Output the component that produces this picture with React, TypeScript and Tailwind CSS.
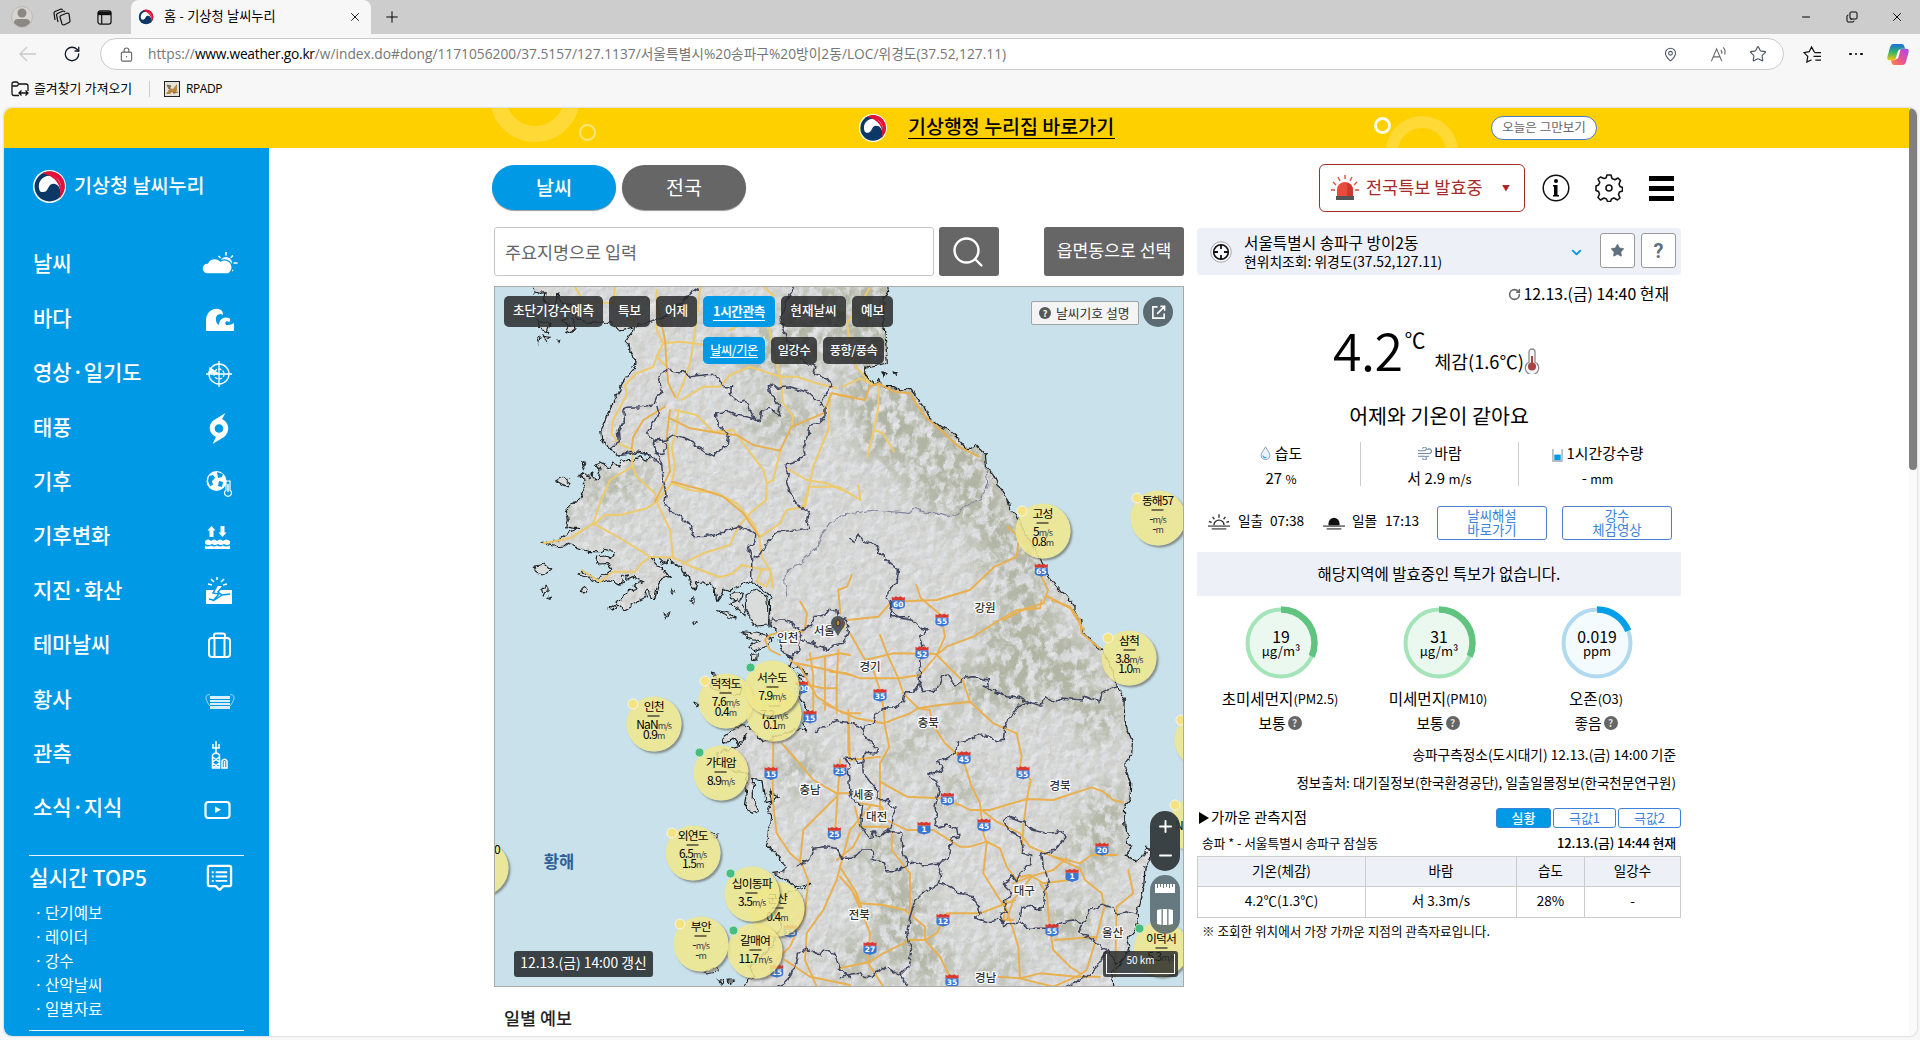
import React from "react";
import { Star, ChevronDown, Search, Minus, Plus, X, RotateCw, MapPin, Copy } from "lucide-react";

const KR = "font-['Noto_Sans_CJK_KR',sans-serif]";
const UI = "font-['Open_Sans','Noto_Sans_CJK_KR',sans-serif]";

/* ---------- map geometry ---------- */
type Tile = { x: number; y: number; kx: number; ky: number };
const NW: Tile = { x: 490, y: 280, kx: 1 / 3, ky: 1 / 3 };
const SW: Tile = { x: 490, y: 600, kx: 1 / 3, ky: 1 / 3 };
const SE: Tile = { x: 840, y: 600, kx: 1 / 3, ky: 1 / 3 };
const NE: Tile = { x: 490, y: 220, kx: 1 / 2.24, ky: 1 / 3 };

const pts = (t: Tile, s: string) =>
  s.trim().split(/\s+/).map((p) => {
    const [a, b] = p.split(",").map(Number);
    return `${(t.x + a * t.kx).toFixed(1)},${(t.y + b * t.ky).toFixed(1)}`;
  }).join(" ");

const WEST_COAST = [
  pts(NW, "130,0 130,20 135,35 150,40 165,38 160,60 175,70 185,85 200,80 200,40 215,70 235,75 262,80 258,110 270,120 300,130 335,125 350,130 360,122 380,150 400,148 430,140 428,155 405,182 418,195 420,215 438,245 435,260 412,285 395,310 385,340 370,365 358,390 345,420 332,450 335,475 345,490 352,503 362,505 375,525 390,528 410,518 430,512 470,518 480,535 470,540 450,530 430,545 410,540 395,545 385,560 370,545 355,565 345,552 330,545 320,550 330,570 325,595 315,600 305,580 300,590 275,578 270,590 285,600 280,615 283,630 275,640 265,660 260,668 245,672 228,690 235,720 230,740 250,745 270,745 245,752 230,758 215,770 200,782 175,790 152,785 175,795 200,800 225,798 235,790 255,800 280,810 300,815 330,815 345,808 370,815 372,825 362,838 350,830 340,825 320,828 318,845 330,852 350,850 362,860 365,870 345,885 325,895 300,888 290,880 275,870 265,885 290,890 310,902 330,908 360,900 370,905 385,915 400,905 395,890 412,885 410,900 430,890 450,900 460,905 430,915 440,925 420,930 400,950 380,970 358,985 365,990 385,975 400,990 410,985 440,970 450,960 470,950 465,935 475,930 480,955 495,955 500,930 505,910 520,890 540,895 530,880 515,870 520,860 500,855 485,838 490,830 510,838 520,850 540,840 550,848 575,860 580,875 595,890 605,920 615,930 620,910 635,905 650,915 660,908 675,925 680,965 695,945 700,925 720,935 740,920 760,912 785,905 800,915 820,930 845,950"),
  pts(SW, "838,0 840,78 860,90 865,120 870,140 880,160 905,175 895,200 910,205 925,200 950,220 945,230 925,222 935,250 925,290 960,340 935,370 950,392 920,385 890,400 850,410 820,425 780,385 750,370 735,390 720,395 700,410 700,430 730,415 745,435 770,400 750,440 700,450 680,460 690,490 720,510 775,520 765,560 770,590 765,625 790,640 805,630 790,600 790,535 815,540 820,570 825,605 848,600 840,575 865,590 845,605 830,630 845,650 842,670 835,690 832,720 825,740 845,745 860,765 870,770 875,790 885,800 885,815 850,820 890,840 920,860 960,850 940,865 900,875 870,890 850,920 860,960 880,980 860,1000 845,1040 820,1065 790,1085 780,1100 790,1130 770,1140 758,1175"),
].join(" ");
const EAST_COAST = [
  pts(SE, "820,1175 815,1120 835,1100 850,1080 870,1040 862,1015 885,990 895,965 890,940 900,900 912,850 915,800 932,775 930,748 920,745 905,775 885,785 855,765 875,740 862,725 862,700 855,680 853,620 870,600 872,550 858,510 858,485 878,460 880,430 860,385 855,360 852,320 853,295 828,258 820,215 790,155 765,135 730,95 722,60 705,38 705,20 690,0"),
  pts(NE, "1300,1145 1270,1100 1245,1060 1225,1000 1195,930 1180,890 1165,870 1160,840 1140,800 1125,760 1112,740 1110,705 1088,675 1070,690 1050,660 1030,630 1010,620 985,595 975,565 955,530 942,508 925,515 905,500 880,500 870,478 860,495 840,465 845,440 890,430 885,340 880,300 885,250 880,230 893,215 888,180"),
].join(" ");

const ISLANDS = [
  pts(NW, "135,858 165,852 182,868 160,885 140,880"), pts(NW, "198,602 215,592 240,608 235,620 215,612"),
  pts(NW, "155,930 170,918 172,938 160,945"), pts(NW, "275,545 288,550 280,565"), pts(NW, "274,930 285,922 292,936 278,942"),
  pts(NW, "720,945 735,935 760,940 752,960 728,962"), pts(NW, "600,965 612,953 612,970"), pts(NW, "522,998 536,998 530,1012"),
  pts(NW, "608,1022 620,1025 612,1036"), pts(NW, "685,992 720,1000 740,1018 715,1012"), pts(NW, "172,955 188,948 180,958"),
  pts(NW, "768,945 800,928 830,950 836,1035 800,1038 782,1020 770,985"), pts(NW, "720,970 745,960 768,990 765,1010 740,985"),
  pts(NW, "140,120 180,130 172,158 158,150"), pts(NW, "140,175 150,172 146,192"), pts(NW, "160,168 180,172 172,182"),
  pts(NW, "215,120 250,118 255,150 225,160 238,138"), pts(NW, "198,180 206,178 204,186"), pts(NW, "545,925 553,932 548,945"),
  pts(SW, "755,95 800,100 850,115 830,140 790,152 775,140 810,120 770,112"), pts(SW, "785,165 802,160 800,180 788,178"),
  pts(SW, "665,218 680,225 675,235"), pts(SW, "615,310 628,310 622,322"), pts(SW, "650,245 690,240 755,262 750,285 700,275 660,262"),
  pts(SW, "660,700 682,705 672,715"), pts(SW, "640,1115 680,1100 685,1115 650,1122"), pts(SW, "685,1140 700,1138 695,1152"),
  pts(SW, "715,1140 730,1140 722,1150"), pts(NE, "905,455 912,460 908,466"), pts(NE, "880,455 888,462 882,470"),
];

const BORDERS = [
  pts(NW, "625,22 600,40 580,65 545,80 530,110 500,120 470,128 430,140"),
  pts(NW, "510,280 540,265 550,275 580,275 600,290 640,285 665,283 690,300 700,320 725,320 720,345 745,365 765,360 790,410 810,428 815,390 840,385 865,405 872,375 840,345 835,320 850,312 860,325 900,320 950,335 985,365 1005,385 1005,410 985,430 960,435 955,470 940,500 945,525 920,545 885,555 895,580 890,605 900,640 930,680 958,695 950,720 958,745 900,752 860,755 830,790 810,825 785,838"),
  pts(NW, "510,280 505,310 520,335 500,350 490,375 450,380 410,382 402,390 403,420 385,450 388,485 362,500"),
  pts(NW, "500,375 505,400 490,430 470,455 480,475 500,485 525,480 550,465 580,472 610,485 620,500 650,520 675,528 690,510 715,495 718,470 700,450 680,430 680,400 710,392 740,405 790,415 810,428"),
  pts(NW, "490,485 500,520 515,555 520,600 528,640 525,670 540,695 575,710 600,735 612,770 660,768 700,755 740,740 780,752 797,765 795,785 775,800 785,838 785,905"),
  pts(NW, "375,530 400,525 440,517 480,525 500,545 515,555"),
  pts(NW, "490,485 510,480 530,495 520,520 500,520"),
  pts(NE, "680,200 670,220 650,300 665,360 690,390 700,425 730,440 725,460 755,475 765,490 760,510 745,530 740,560"),
  pts(NE, "803,955 815,965 825,945 840,965 865,975 875,1000 895,1030 915,1045 912,1090 895,1100 890,1130 900,1165 895,1190 940,1190"),
  pts(SE, "155,0 150,30 185,55 215,60 240,85 265,90 240,110 250,140 240,150 238,250 220,275 195,275 190,305 165,322 135,320 105,345 100,370 70,380 80,415 115,450 110,462 75,460 68,490 70,520 90,545 110,570 112,600 145,598 150,620 170,625 155,650 155,670 145,690 160,698 185,700 190,760 205,785 250,795 295,790"),
  pts(SW, "840,78 850,60 880,60 910,75 935,90 965,75 975,50 1005,45 1020,25 1040,30 1045,50 1070,60 1075,95 1060,130 1030,135 1010,150 970,130 935,120 925,95"),
  pts(SW, "925,120 930,150 905,170 880,160"),
  pts(SE, "238,250 245,275 290,270 305,230 325,225 345,255 370,235 400,230 445,240 448,258 430,262 460,272 500,290 540,295 565,305 605,318 615,290 640,308 670,295 730,300 730,285 780,305 785,280 830,258"),
  pts(SE, "565,305 540,315 510,350 495,380 490,420 470,425 420,400 390,420 355,425 345,460 320,475 290,485 310,500 300,520 285,515 260,525 290,545 298,570 285,620 290,640 282,675 300,680 320,675 350,685 355,710 335,715 325,775 295,790 305,820 298,850 250,875 225,900 210,950 200,1000 215,1050 205,1100 180,1125 205,1160"),
  pts(SE, "-75,395 -10,362 40,370 70,390"),
  pts(SE, "68,490 40,475 15,475 30,500 25,520 30,580 45,610 68,615 65,640 62,680 75,700 95,718 100,690 115,712 130,700 145,690"),
  pts(SW, "920,800 960,775 970,745 1000,740 1040,745 1055,775 1080,775 1100,765 1115,750 1145,750 1150,780 1180,785 1185,812 1215,812 1245,800 1255,785"),
  pts(SE, "298,850 330,860 355,880 390,885 415,915 420,940 405,955 440,965 480,960 490,978 510,970 540,965 545,925 575,915 590,930 610,925 615,870 628,845 610,800 605,760 645,750 675,715 665,695 620,700 575,690 550,665 505,650 490,660 505,690 540,710 550,760 575,765 570,790 540,820 530,845 515,825 490,855 515,880 490,905 505,940 480,940 490,978"),
  pts(SE, "545,965 560,985 640,985 665,965 700,960 730,970 715,1000 745,1010 770,1030 800,1050 830,1090"),
  pts(SE, "730,970 750,930 790,915 820,925 830,945 860,935 890,945"),
  pts(SE, "680,1160 740,1130 770,1100 800,1055"),
  pts(SE, "0,1130 50,1120 80,1130 110,1120 135,1100 180,1125"),
  pts(SW, "860,1160 880,1150 900,1130 920,1090 925,1060 950,1045 990,1065 1000,1050 1035,1065 1050,1110 1080,1130"),
];
const DMZ = pts(NE, "665,1130 660,1080 665,1050 700,1030 705,1010 735,980 740,950 760,910 790,885 860,870 940,880 950,865 980,880 1010,880 1040,890 1060,860 1100,840 1115,790 1110,740");

const YELLOW = [
  pts(NW, "255,20 280,65 375,70 430,130"), pts(NW, "375,20 370,70"),
  pts(NW, "500,30 500,150 520,190 500,230 490,260 440,280 405,315 410,345 370,420 365,460 385,490 430,510 425,560 360,600 330,670 310,730 240,775 160,790"),
  pts(NW, "310,730 400,780 480,830 550,833 540,750 500,665 495,640 440,590 425,555"),
  pts(NW, "500,665 470,685 390,705 345,705 310,735"),
  pts(NW, "480,830 455,850 435,875 370,875 330,905 275,870"),
  pts(NW, "550,833 610,862 690,892 730,880 755,855 800,865 840,870 850,925"),
  pts(NW, "815,870 800,905 830,920 845,880"),
  pts(NW, "580,850 640,820 720,795 745,740 780,700 828,660 830,610"),
  pts(NW, "545,610 600,630 680,640 740,670 790,730 808,770 815,830 840,870"),
  pts(NW, "520,190 570,185 610,190 645,195"), pts(NW, "610,190 600,250 580,310 560,355"),
  pts(NW, "630,20 625,80 610,190"), pts(NW, "500,230 530,260"),
  pts(NW, "565,390 560,450 545,500 555,560 545,610 500,665"),
  pts(NW, "555,390 620,405 670,455 730,450 790,530 820,570 830,610 850,600 860,555 875,500"),
  pts(NW, "575,360 640,320 690,320 720,285 780,260 870,290 920,290 980,310 1040,325"),
  pts(NW, "820,20 850,45 830,90 840,160 870,290 880,370 910,410 905,440"), pts(NW, "890,565 950,600 1010,610 1080,640"),
  pts(NW, "720,150 760,130 830,120"),
  pts(NW, "1020,340 1015,450 970,560 945,680 890,690 870,730 810,770"),
  pts(NE, "870,495 870,560 860,630 845,710"), pts(NE, "860,630 880,640 905,695"), pts(NE, "700,860 715,800 780,800 830,840 825,795"),
  pts(NE, "850,205 830,250 800,310 810,400 820,440 855,495"), pts(NE, "790,500 830,475 860,495"),
];
const ORANGE = [
  pts(NW, "500,60 525,180 530,260 535,310 555,350"), pts(NW, "540,390 530,470 540,575 495,665"),
  pts(NW, "525,380 460,420 430,470 425,505"),
  pts(NW, "540,415 600,445 690,460 740,465 790,495 870,512 905,440 1000,400 1025,340 1080,350"),
  pts(NW, "545,605 640,630 700,650 760,700 808,770"),
  pts(NE, "780,525 840,540 850,500 870,490 905,515 940,520 975,590 1010,630 1050,680 1095,710"),
  pts(NE, "1160,920 1185,950 1180,1010 1130,1040 1075,1110 1000,1140 900,1145 870,1190 800,1200 790,1225"),
  pts(NE, "1225,1040 1250,1110 1240,1150 1200,1165 1150,1200"), pts(NE, "1250,1130 1300,1165 1330,1230"),
  pts(NE, "955,1095 965,1135 1010,1185"), pts(NE, "810,1065 800,1100 780,1110 785,1180"), pts(NE, "695,1145 710,1180 705,1230"),
  pts(SE, "605,0 600,25 530,30 470,65 400,110 320,140 290,165"), pts(SE, "635,0 690,20 720,60 725,100 780,145"),
  pts(SE, "306,60 315,110 290,165 240,225 175,235 60,235 20,220 -30,215"), pts(SE, "75,180 160,160 290,162"),
  pts(SE, "290,165 370,245 390,305 460,370 530,400 545,470 540,500 572,540 560,600 550,680 545,760"),
  pts(SE, "120,105 145,170 175,235 190,280 235,325 300,315 390,305"), pts(SE, "30,100 70,170 100,210 120,270 130,320 135,380 148,440 120,490 120,630"),
  pts(SE, "235,325 210,340 130,370 50,355 -50,310"),
  pts(SE, "235,325 270,330 275,370 315,430 370,480 395,560 420,610 430,700 440,730 430,820 480,900 500,930 520,990 535,1040 540,1135"),
  pts(SE, "120,545 200,590 300,595 360,615 390,630 450,630 560,597 640,600 700,580 755,562 790,575 820,600 848,607"),
  pts(SE, "425,630 470,665 540,700 570,740 640,770 720,790 755,765 830,765"), pts(SE, "680,775 640,810 570,830 520,850"),
  pts(SE, "640,770 720,805 735,840 785,880 793,920 770,1010 740,1110 710,1130 600,1120 540,1135 475,1130"),
  pts(SE, "520,835 570,825 610,850 690,840"), pts(SE, "600,850 620,880 630,990 640,1050 690,1100 720,1120"),
  pts(SE, "525,900 420,940 320,940 290,1000 255,1020 210,1020 130,1060 90,1085 0,1105"),
  pts(SE, "140,660 200,690 280,690 360,740 390,740 440,725 480,745 500,800 530,840"),
  pts(SE, "155,700 155,750 210,820 210,940"), pts(SE, "195,930 255,980 255,1020 300,1070 335,1140"), pts(SE, "60,700 40,740 -10,780"),
  pts(SE, "0,830 35,870 60,910 130,915 195,930"), pts(SE, "40,880 75,960 90,1000 85,1090 130,1160"),
  pts(SE, "865,810 880,880 830,920 825,1130"), pts(SE, "25,375 25,450 30,480 120,470"), pts(SE, "645,1020 770,1010"),
  pts(SE, "60,610 125,620 140,660"), pts(SE, "500,900 490,960 520,960"), pts(SE, "540,1135 640,1160 710,1130 780,1130"),
  pts(SE, "45,620 60,680 145,680"), pts(SE, "575,830 520,900 500,960"),
  pts(SW, "950,180 1050,160 1080,165"), pts(SW, "875,430 920,480 970,540 1040,580 1080,580"),
  pts(SW, "850,420 848,600 860,700 900,760 935,790 955,840 945,940 900,1040 860,1080"), pts(SW, "1040,590 940,690 930,790"),
  pts(SW, "900,180 930,200 980,290 1060,340 1110,340"), pts(SW, "960,160 970,230 970,330"), pts(SW, "1005,170 1005,330"),
  pts(SW, "1045,150 1040,250 1040,340"), pts(SW, "920,190 1040,215 1080,225"), pts(SW, "930,250 1000,265 1040,265"),
  pts(SW, "870,165 840,150 825,120 840,105 880,95 940,95"), pts(SW, "1140,620 1080,690 1040,840 1000,930 950,1000 945,1080 980,1160"),
  pts(SW, "1050,480 1035,700"), pts(SW, "1075,330 1080,480"), pts(SW, "885,1080 960,1130 1080,1155"), pts(SW, "1050,800 1100,880 1120,940"),
];

const SHIELDS: [Tile, number, number, string][] = [
  [SE, 175, 8, "60"], [SE, 306, 60, "55"], [SE, 246, 158, "52"], [SE, 120, 285, "35"], [SE, 372, 473, "45"], [SE, 549, 518, "55"],
  [SE, 322, 597, "30"], [SE, 252, 684, "1"], [SE, 432, 675, "45"], [SE, 786, 747, "20"], [SE, 696, 826, "1"], [SE, 309, 960, "12"],
  [SE, 636, 990, "55"], [SE, 90, 1045, "27"], [SE, 336, 1142, "35"], [SW, 843, 520, "15"], [SW, 1050, 510, "25"], [SW, 1033, 700, "25"],
  [SW, 960, 350, "15"], [SW, 934, 262, "100"], [SW, 901, 993, "15"], [SW, 860, 1113, "15"], [NE, 1235, 1050, "65"],
];
const CITIES: [Tile, number, number, string][] = [
  [SE, 435, 22, "강원"], [SE, 90, 200, "경기"], [SE, 265, 367, "충북"], [SE, 70, 585, "세종"], [SE, 110, 649, "대전"], [SE, 660, 556, "경북"],
  [SE, 58, 943, "전북"], [SE, 553, 873, "대구"], [SE, 818, 998, "울산"], [SE, 437, 1133, "경남"], [SW, 1003, 93, "서울"], [SW, 893, 114, "인천"], [SW, 960, 568, "충남"],
];
/* mountain shading: cx, cy, rx, ry, rotation */
const HILLS = [
  [880, 400, 35, 70, -10], [950, 460, 50, 70, -25], [1010, 560, 28, 90, -22], [1040, 660, 70, 40, 25], [860, 310, 80, 34, 0], [775, 350, 50, 26, 0],
  [780, 420, 40, 20, 0], [985, 690, 50, 22, 10], [915, 745, 45, 12, -30], [1100, 720, 30, 20, 0], [900, 910, 30, 40, 0], [925, 960, 30, 25, 0],
  [1100, 830, 25, 50, 20], [800, 770, 20, 25, 0], [1070, 920, 30, 20, 0], [880, 850, 25, 20, 0], [590, 500, 35, 10, -10], [625, 480, 30, 14, -10],
  [960, 790, 25, 15, -30], [860, 960, 30, 20, 0], [1000, 965, 25, 15, 0],
];

function MapCanvas() {
  const land = `${WEST_COAST} ${EAST_COAST}`;
  return (
    <svg viewBox="495 287 688 699" className="block size-full">
      <defs>
        <clipPath id="land"><polygon points={land} /></clipPath>
        <filter id="rough" x="0" y="0" width="1" height="1">
          <feTurbulence type="fractalNoise" baseFrequency="0.16" numOctaves="2" seed="4" />
          <feDisplacementMap in="SourceGraphic" scale="6" xChannelSelector="R" yChannelSelector="G" />
        </filter>
        <filter id="relief" x="0" y="0" width="1" height="1" colorInterpolationFilters="sRGB">
          <feTurbulence type="fractalNoise" baseFrequency="0.13" numOctaves="4" seed="8" />
          <feColorMatrix values="0 0 0 0 0  0 0 0 0 0  0 0 0 0 0  1 0 0 0 0" />
          <feDiffuseLighting surfaceScale="0.34" diffuseConstant="1.21" lightingColor="#dcddde">
            <feDistantLight azimuth="225" elevation="55" />
          </feDiffuseLighting>
        </filter>
        <filter id="hills" x="0" y="0" width="1" height="1" colorInterpolationFilters="sRGB">
          <feGaussianBlur in="SourceGraphic" stdDeviation="12" result="b" />
          <feTurbulence type="fractalNoise" baseFrequency="0.11 0.08" numOctaves="5" seed="12" />
          <feColorMatrix values="0 0 0 0 0  0 0 0 0 0  0 0 0 0 0  4.5 0 0 0 -1.7" result="n" />
          <feComposite in="b" in2="n" operator="in" />
        </filter>
      </defs>
      <rect x="494" y="286" width="690" height="701" fill="#c8e1ea" />
      <g filter="url(#rough)">
        <rect x="494" y="286" width="690" height="701" fill="#c8e1ea" />
        <polygon points={land} fill="#dcdddd" />
        <g clipPath="url(#land)">
          <rect x="494" y="286" width="690" height="701" filter="url(#relief)" />
          <g filter="url(#hills)" opacity="0.75">
            <rect x="494" y="286" width="690" height="701" fill="#b3b5a0" opacity="0.2" />
            {HILLS.map(([x, y, rx, ry, r], i) => (
              <ellipse key={i} cx={x} cy={y} rx={rx} ry={ry} fill="#a5a992" transform={`rotate(${r} ${x} ${y})`} />
            ))}
          </g>
        </g>
        <polyline points={WEST_COAST} fill="none" stroke="#1d2024" strokeWidth="1.2" />
        <polyline points={EAST_COAST} fill="none" stroke="#1d2024" strokeWidth="1.2" />
        {ISLANDS.map((p, i) => <polygon key={i} points={p} fill="#d9dcdb" stroke="#1d2024" strokeWidth="1.1" />)}
      </g>
      <g fill="none" strokeLinejoin="round" strokeLinecap="round">
        {YELLOW.map((p, i) => <polyline key={i} points={p} stroke="#edcb6c" strokeWidth="2" />)}
        {ORANGE.map((p, i) => <polyline key={i} points={p} stroke="#e9b04e" strokeWidth="1.9" />)}
      </g>
      <g fill="none" strokeLinejoin="round" filter="url(#rough)">
        {BORDERS.map((p, i) => <polyline key={i} points={p} stroke="#40455f" strokeWidth="1.5" />)}
        <polyline points={DMZ} stroke="#8486a0" strokeWidth="1.2" />
      </g>
      {SHIELDS.map(([t, x, y, n], i) => (
        <g key={i} transform={`translate(${t.x + x * t.kx} ${t.y + y * t.ky})`}>
          <path d="M-6.5 -2.5H6.5C6 0 7.5 2 6 4.5C4 6 2 5.5 0 6.8C-2 5.5 -4 6 -6 4.5C-7.5 2 -6 0 -6.5 -2.5Z" fill="#3a77d4" />
          <path d="M-6.5 -6L-4.5 -5L-2.5 -6.3L0 -5.3L2.5 -6.3L4.5 -5L6.5 -6V-2.5H-6.5Z" fill="#d8392f" />
          <text y="4" textAnchor="middle" fontSize="7.5" fontWeight="700" fill="#fff" className="font-['DejaVu_Sans']">{n}</text>
        </g>
      ))}
      {CITIES.map(([t, x, y, n], i) => (
        <text key={i} x={t.x + x * t.kx} y={t.y + y * t.ky + 4.2} textAnchor="middle" fontSize="11.5" fontWeight="500" fill="#333"
          stroke="#fff" strokeWidth="2.4" paintOrder="stroke" className={KR}>{n}</text>
      ))}
      <text x="559" y="868" textAnchor="middle" fontSize="16.5" fontWeight="700" fill="#2f6097" className={KR}>황해</text>
      <path d="M838 636C835 630 831 627 831 623A7 7 0 0 1 845 623C845 627 841 630 838 636Z" fill="#55585a" />
      <ellipse cx="838" cy="623" rx="2" ry="3" fill="#c08a2c" stroke="#333" />
    </svg>
  );
}

type BuoyData = { x: number; y: number; name?: string; a?: string; b?: string; dot: "y" | "g" | "" };
const BUOYS: BuoyData[] = [
  { x: 1157.5, y: 518, name: "동해57", a: "-", b: "-", dot: "y" },
  { x: 1042.5, y: 530.5, name: "고성", a: "5", b: "0.8", dot: "y" },
  { x: 1129, y: 657.5, name: "삼척", a: "3.8", b: "1.0", dot: "y" },
  { x: 1201.5, y: 740, dot: "y" },
  { x: 1195.5, y: 825, dot: "y" },
  { x: 481, y: 868, dot: "" },
  { x: 653.7, y: 723.5, name: "인천", a: "NaN", b: "0.9", dot: "y" },
  { x: 725.5, y: 701, name: "덕적도", a: "7.6", b: "0.4", dot: "y" },
  { x: 774, y: 713.5, name: " ", a: "7.2", b: "0.1", dot: "" },
  { x: 772, y: 688, name: "서수도", a: "7.9", dot: "g" },
  { x: 720.7, y: 773, name: "가대암", a: "8.9", dot: "g" },
  { x: 692.7, y: 852.7, name: "외연도", a: "6.5", b: "1.5", dot: "y" },
  { x: 777, y: 908.5, name: "군산", a: "", b: "0.4", dot: "" },
  { x: 751.7, y: 893.7, name: "십이동파", a: "3.5", dot: "g" },
  { x: 700.7, y: 943.5, name: "부안", a: "-", b: "-", dot: "y" },
  { x: 755, y: 951, name: "갈매여", a: "11.7", dot: "g" },
  { x: 1161, y: 949, name: "이덕서", a: "5.3", dot: "g" },
];

function Buoy({ x, y, name, a, b, dot }: BuoyData) {
  const single = !a || !b;
  return (
    <div className="absolute size-[55px] -translate-x-1/2 -translate-y-1/2" style={{ left: x - 495, top: y - 287 }}>
      <div className="absolute inset-0 rounded-full bg-[#f0e68c]/85 shadow-[2px_2px_2px_rgba(90,90,80,0.6)]" />
      {dot === "y" && <i className="absolute left-[1px] top-[2px] size-[11px] rounded-full border border-[#f8f6e6] bg-[#f4e283]" />}
      {dot === "g" && <i className="absolute left-[1px] top-[2px] size-[10px] rounded-full border border-[#cfe9d6] bg-[#45be80]" />}
      {name && (
        <div className={`absolute inset-0 flex flex-col items-center whitespace-nowrap text-[11.8px] tracking-[-0.9px] text-black ${single ? "pt-[9px]" : "pt-[2px]"}`}>
          <span className="h-[15px] leading-[14px]">{name}</span>
          <i className="mt-[2px] h-px w-[12px] flex-none bg-black" />
          {a && <span className="mt-[2px] h-[10px] text-[12px] leading-[10px]">{a}<small className="text-[9px] text-gray-700">m/s</small></span>}
          {b && <span className={`h-[10px] text-[12px] leading-[10px] ${a ? "" : "mt-[2px]"}`}>{b}<small className="text-[9px] text-gray-700">m</small></span>}
        </div>
      )}
    </div>
  );
}

/* ---------- small drawings ---------- */
function Emblem({ className }: { className: string }) {
  return (
    <svg viewBox="0 0 32 32" className={className}>
      <circle cx="16" cy="16" r="16" fill="#fff" />
      <circle cx="16" cy="16" r="14.5" fill="#0b3866" />
      <path d="M9 3.2A14.5 14.5 0 0 1 27.5 25C30 14 22 5 9 3.2Z" fill="#e4123a" />
      <path d="M6.5 20C3.5 12 9 5.500 16 5.500C24 5.500 29 13 27 23C26.500 16 23 12.500 18.500 13.500C14.500 14.500 15 20 11.500 21C9.500 21.800 7.500 21.500 6.500 20Z" fill="#fff" />
      <path d="M9 3.200C21 2 30 12 27.500 25L25.800 28C29 16 22 6 9 3.200Z" fill="#e4123a" />
    </svg>
  );
}

const MENU: [string, React.ReactNode][] = [
  ["날씨", <g><circle cx="24" cy="14" r="6" fill="#fff" /><path d="M24 3v3.500M31 6.500l-2.300 2.300M16.500 7l2 2M31.500 14h4M31 22l-2-2" stroke="#fff" strokeWidth="1.600" /><path d="M5.500 25a5.500 5.500 0 0 1 0-11a8 8 0 0 1 13-2a6.500 6.500 0 0 1 8 13z" fill="#fff" stroke="#0099e5" strokeWidth="1.400" /></g>],
  ["바다", <g><path d="M4 27V16C4 8 12 2 19 6c2 1.500 2 4 2 5-4-3-8 1-7 5 0 2 1 4 3 5 0-6 5-9 10-7 2 1 1 4 0 4-2-2-5 0-3 3 3 0 5 0 8-2v8z" fill="#fff" /></g>],
  ["영상·일기도", <g fill="none" stroke="#fff" strokeWidth="1.300"><circle cx="17" cy="16" r="10" /><circle cx="17" cy="16" r="5" strokeDasharray="3 1.500" /><path d="M17 3v26M4 16h26" /><path d="M17 16L8 10l-1 5z" fill="#fff" /></g>],
  ["태풍", <g><path d="M23.500 1L20 7c8 4 8 13 2 18l-11.500 7L14 25C6 21 6 12 12 8z" fill="#fff" /><circle cx="17" cy="16.500" r="4.300" fill="#0099e5" /></g>],
  ["기후", <g><circle cx="14.500" cy="14" r="10" fill="#fff" /><path d="M7 9l4-1 2 3-3 3 1 4-3 1-2-5zM15 5l6 2-1 3-4 1zM17 14l4 1-1 5-4-1z" fill="#0099e5" /><path d="M24 14h4v9a3.500 3.500 0 1 1-4 0z" fill="#0099e5" stroke="#fff" strokeWidth="1.200" /><path d="M26 17v8" stroke="#fff" strokeWidth="1.500" /></g>],
  ["기후변화", <g fill="#fff"><path d="M9.500 5l4 4.500h-2V16h-4V9.500h-2zM20.500 16l4-4.500h-2V5h-4v6.500h-2z" /><path d="M3 20q3-3 6 0q3-3 6 0q3-3 6 0q3-3 7 0v3q-3 2-6 0q-3 2-6 0q-3 2-6 0q-3 2-7 0zM3 24.500q3 2 6 0q3 2 6 0q3 2 6 0q3 2 7 0V28H3z" /></g>],
  ["지진·화산", <g><path d="M4 14h8l3-4h5l-2 4h12v14H4z" fill="#fff" /><path d="M15 10l-4 7 6 1-6 7 9-6-4-3 6-7M20 19l8-1M11 24l-4-1" fill="none" stroke="#0099e5" strokeWidth="1.500" /><path d="M6 8l4 1M9 3l3 3M15 1v3M22 3l-3 3M25 8l-4 1" stroke="#fff" strokeWidth="1.500" /></g>],
  ["테마날씨", <g fill="none" stroke="#fff" strokeWidth="2"><rect x="7" y="8" width="21" height="19" rx="3" /><path d="M12.500 8v19M22.500 8v19M12 8V5q0-1.500 2-1.500h7q2 0 2 1.500v3" /></g>],
  ["황사", <g><path d="M8 12h20v13H8z" fill="#d9f0fb" /><path d="M8 15.500h20M8 18.500h20M8 21.500h20" stroke="#0099e5" strokeWidth="1" /><path d="M8 11C3.500 9 2 15 8 22M28 11c4.500-2 6 4 0 11" fill="none" stroke="#a9dcf6" strokeWidth="1" /></g>],
  ["관측", <g fill="none" stroke="#fff" strokeWidth="1.500"><path d="M14 2v12M11 5v4h6V5" /><path d="M10.500 29V16q3.500-4 7 0v13zM10.500 18l7 5M17.500 18l-7 5M10.500 24l7 5M17.500 24l-7 5M20 29v-7q2.500-3.500 5 0v7zM22.500 22v7" /></g>],
  ["소식·지식", <g><rect x="3.500" y="9" width="24" height="16" rx="3" fill="none" stroke="#fff" strokeWidth="2.200" /><path d="M13 13.500l6 3.300-6 3.300z" fill="#fff" /></g>],
];

function Sidebar() {
  return (
    <aside className={`flex h-[888px] w-[265px] flex-none flex-col overflow-hidden rounded-bl-lg bg-[#0099e5] text-white ${KR}`}>
      <div className="mt-[21px] flex h-[34px] items-center pl-[29px]">
        <Emblem className="size-[33px]" />
        <span className="ml-[8px] whitespace-nowrap pb-[3px] text-[19.6px] font-medium">기상청 날씨누리</span>
      </div>
      <nav className="mt-[34px] flex flex-col">
        {MENU.map(([label, icon]) => (
          <div key={label} className="flex h-[54.4px] items-center pl-[29px]">
            <span className="w-[169px] whitespace-nowrap pb-[2px] text-[21px] font-medium">{label}</span>
            <svg viewBox="0 0 36 34" className="mt-1 h-[34px] w-[36px]">{icon}</svg>
          </div>
        ))}
      </nav>
      <div className="ml-[25px] mt-[20px] w-[215px] border-y border-white/90 pb-[9px]">
        <div className="mt-[4px] flex h-[34px] items-center justify-between">
          <span className="pb-px text-[21.3px] font-medium">실시간 TOP5</span>
          <svg viewBox="0 0 28 28" className="mr-[11px] size-[27px]" fill="none" stroke="#fff">
            <path d="M4 2h20q2 0 2 2v17q0 2-2 2h-6l-4 4-4-4H4q-2 0-2-2V4q0-2 2-2z" strokeWidth="2.400" />
            <path d="M10 8.500h12M10 13h12M10 17.500h12M6 8.500h2M6 13h2M6 17.500h2" strokeWidth="2" />
          </svg>
        </div>
        <ul className="mt-[6px] text-[15.6px]">
          {["단기예보", "레이더", "강수", "산악날씨", "일별자료"].map((s) => (
            <li key={s} className="flex h-[24.2px] items-center pl-[5px]"><span className="w-[11px] flex-none">·</span>{s}</li>
          ))}
        </ul>
      </div>
    </aside>
  );
}

function Chrome() {
  return (
    <header className={`flex flex-none flex-col text-black ${UI}`}>
      <div className="flex h-[34px] items-center bg-[#cdcdcd]">
        <svg viewBox="0 0 22 22" className="ml-[11px] size-[22px]"><circle cx="11" cy="11" r="10.500" fill="#d6d3d0" stroke="#bdbab6" /><circle cx="11" cy="7" r="4.500" fill="#8b8783" /><path d="M3 17q0-4 4-4h8q4 0 4 4q-8 8-16 0z" fill="#8b8783" /></svg>
        <svg viewBox="0 0 18 18" className="ml-[20px] size-[18px]" fill="none" stroke="#111" strokeWidth="1.200"><path d="M2 12L1 5q0-1 1-1.500L8 1q1 0 1.500 1M5 14L3.500 7q0-1 1-1.500L10 3q1.500 0 2 1" /><path d="M8 7.500L14 5q1.500 0 2 1l1 7q0 1-1 1.500L11 17q-1.500 0-2-1L7 9q0-1 1-1.500z" /></svg>
        <svg viewBox="0 0 16 16" className="ml-[26px] size-[15px]" fill="none" stroke="#111" strokeWidth="1.300"><rect x="1" y="1" width="14" height="14" rx="2.500" /><path d="M1 3.500h14" strokeWidth="4" /><path d="M5 5v10" /></svg>
        <div className="ml-[19px] flex h-[34px] w-[240px] items-center rounded-t-lg bg-[#f7f7f7] pl-[7px]">
          <Emblem className="size-[16px]" />
          <span className="ml-[10px] w-[184px] whitespace-nowrap pb-px text-[13.2px]">홈 - 기상청 날씨누리</span>
          <X className="size-[14px] flex-none" strokeWidth={1.5} />
        </div>
        <Plus className="ml-[12px] size-[18px]" strokeWidth={1.3} />
        <div className="ml-auto flex items-center">
          <Minus className="size-[12px]" strokeWidth={2} />
          <Copy className="ml-[34px] size-[12px] -scale-x-100 rotate-180" strokeWidth={2} />
          <X className="ml-[32px] mr-[16px] size-[14px]" strokeWidth={1.6} />
        </div>
      </div>
      <div className="flex h-[40px] items-center bg-[#f7f7f7]">
        <svg viewBox="0 0 18 16" className="ml-[19px] h-[16px] w-[18px]" fill="none" stroke="#c9c9c9" strokeWidth="1.300"><path d="M17 8H1M8 1L1 8l7 7" /></svg>
        <RotateCw className="ml-[26px] size-[18px] text-gray-900" strokeWidth={1.7} />
        <div className="ml-[19px] flex h-[32px] w-[1684px] items-center rounded-full border border-[#cbcbcb] bg-white pl-[18px] text-[13.76px]">
          <svg viewBox="0 0 14 16" className="size-[15px]" fill="none" stroke="#666" strokeWidth="1.200"><rect x="1.500" y="5.500" width="11" height="9.500" rx="1.500" /><path d="M4.500 5.500V3.500a2.500 2.500 0 0 1 5 0v2M7 9.500v1.500" /></svg>
          <span className="ml-[14px] w-[1515px] flex-none whitespace-nowrap text-[#767676]">
            https://<span className="tracking-[-0.25px] text-black">www.weather.go.kr</span>/w/index.do#dong/1171056200/37.5157/127.1137/서울특별시%20송파구%20방이2동/LOC/위경도(37.52,127.11)
          </span>
          <MapPin className="size-[15px] flex-none text-gray-600" strokeWidth={1.7} />
          <svg viewBox="0 0 18 18" className="ml-[32px] size-[17px] flex-none" fill="none" stroke="#666" strokeWidth="1.200"><path d="M1.500 16L7 3l5.500 13M3.500 11.500h7M11.500 4q1.500 1.800 0.800 4M14 1.500q3 3 1.500 7.500" /></svg>
          <Star className="ml-[22px] size-[18px] flex-none text-gray-600" strokeWidth={1.5} />
        </div>
        <svg viewBox="0 0 20 18" className="ml-[19px] h-[17px] w-[19px]" fill="none" stroke="#111" strokeWidth="1.300"><path d="M12 6.500L9 1 6.500 6 1 7l4 4-1 6 5-2.500M12 7h7M11 11h8M13 15h6" /></svg>
        <div className="ml-[27px] flex gap-[3px]"><i className="size-[2.5px] rounded-full bg-black" /><i className="size-[2.5px] rounded-full bg-black" /><i className="size-[2.5px] rounded-full bg-black" /></div>
        <svg viewBox="0 0 24 22" className="ml-[23px] h-[21px] w-[24px]">
          <defs>
            <linearGradient id="cpa" x1="0" y1="0" x2="0" y2="1"><stop offset="0" stopColor="#1b6fe0" /><stop offset=".5" stopColor="#35b36a" /><stop offset="1" stopColor="#f5c60c" /></linearGradient>
            <linearGradient id="cpb" x1="1" y1="0" x2="0" y2="1"><stop offset="0" stopColor="#a34af0" /><stop offset=".6" stopColor="#f0568a" /><stop offset="1" stopColor="#fb8a3c" /></linearGradient>
          </defs>
          <path d="M17 22H8q-2 0-2.500-2l-1-3h4q2 0 3-3l2-7q.500-2 3-2H21q3 0 2 4l-2.500 9q-1 4-3.500 4z" fill="url(#cpb)" />
          <path d="M7 0h9q2 0 2.500 2l1 3h-4q-2 0-3 3l-2 7q-.500 2-3 2H3q-3 0-2-4l2.500-9Q4.500 0 7 0z" fill="url(#cpa)" />
          <path d="M14.500 6h-1.500q-1 1-1.500 3l-2 6.500H11q1 0 1.500-2z" fill="#fff" />
        </svg>
      </div>
      <div className="flex h-[34px] items-center bg-[#f7f7f7] pb-[4px] text-[12px]">
        <svg viewBox="0 0 18 16" className="ml-[11px] h-[16px] w-[18px]" fill="none" stroke="#111" strokeWidth="1.300"><path d="M8 14.500H3q-2 0-2-2V3q0-2 2-2h3l2 2h7q2 0 2 2v5M1 5h5l2-2M8 12h9M14.500 9.500L17 12l-2.500 2.500M10.500 9.500L8 12l2.500 2.500" /></svg>
        <span className="ml-[5px] w-[99px] whitespace-nowrap text-[12.9px]">즐겨찾기 가져오기</span>
        <i className="ml-[16px] h-[16px] w-px bg-[#cfcfcf]" />
        <svg viewBox="0 0 16 16" className="ml-[14px] size-[16px]"><rect x=".5" y=".5" width="15" height="15" fill="#e4e2da" stroke="#222" /><path d="M2 13l4-6 3 1 4-5v6l-2 4-3-2-2 2z" fill="#b5873f" /><path d="M3 4l4 1-2 3zM9 12l5-1" fill="#6d7b95" stroke="#8b6a3c" /></svg>
        <span className="ml-[6px] tracking-[-0.4px]">RPADP</span>
      </div>
    </header>
  );
}

function Banner() {
  return (
    <div className={`relative flex h-[40px] w-[1905px] items-center overflow-hidden rounded-tl-lg bg-[#ffd000] ${KR}`}>
      <i className="absolute left-[486px] top-[-56px] size-[90px] rounded-full border-[16px] border-[#ffda36]" />
      <i className="absolute left-[575px] top-[16px] size-[17px] rounded-full border-[2.5px] border-[#ffe47a]" />
      <i className="absolute left-[1382px] top-[8px] size-[72px] rounded-full border-[12px] border-[#ffda36]" />
      <i className="absolute left-[1370px] top-[9px] size-[17px] rounded-full border-[3px] border-[#fffbe6]" />
      <Emblem className="ml-[855px] size-[28px]" />
      <span className="-mt-[5px] ml-[21px] h-[27px] w-[207px] whitespace-nowrap border-b border-black text-[19.5px] font-medium leading-[28px]">기상행정 누리집 바로가기</span>
      <span className="ml-[376px] grid h-[24px] w-[106px] place-items-center rounded-full border border-[#4d79c7] bg-white pb-px text-[12.5px] leading-none text-[#666]">오늘은 그만보기</span>
    </div>
  );
}

function MapPanel() {
  const top: [string, string][] = [["초단기강수예측", "w-[99px]"], ["특보", "w-[41px]"], ["어제", "w-[41px]"], ["1시간관측", "w-[72px]"], ["현재날씨", "w-[65px]"], ["예보", "w-[41px]"]];
  const sub: [string, string][] = [["날씨/기온", "w-[62px]"], ["일강수", "w-[46px]"], ["풍향/풍속", "w-[61px]"]];
  return (
    <div className={`relative mt-[10px] h-[701px] w-[690px] overflow-hidden border border-[#a9aaa6] ${KR}`}>
      <MapCanvas />
      {BUOYS.map((b, i) => <Buoy key={i} {...b} />)}
      <span className="absolute left-[-1px] top-[553px] text-[12px] text-black">0</span>
      <span className="absolute left-[680px] top-[529px] text-[12px] text-black">N</span>
      <div className="absolute left-[9px] top-[9px] flex gap-[6px] text-[12.6px] font-medium text-white">
        {top.map(([s, w], i) => (
          <span key={s} className={`grid h-[31px] place-items-center whitespace-nowrap rounded-[5px] ${w} ${i === 3 ? "bg-[#0099e5] font-bold" : "bg-[#282a2c]/85"}`}>
            <span className={i === 3 ? "border-b border-white leading-[18px] tracking-[-0.4px]" : "pb-[4px] leading-[27px]"}>{s}</span>
          </span>
        ))}
      </div>
      <div className="absolute left-[208px] top-[50px] flex gap-[6px] text-[12.2px] font-medium tracking-[-0.4px] text-white">
        {sub.map(([s, w], i) => (
          <span key={s} className={`grid h-[27px] place-items-center whitespace-nowrap rounded-[5px] pb-px ${w} ${i === 0 ? "bg-[#0099e5]" : "bg-[#282a2c]/85"}`}>
            <span className={i === 0 ? "border-b border-white leading-[14px]" : "leading-[20px]"}>{s}</span>
          </span>
        ))}
      </div>
      <div className="absolute left-[536px] top-[14px] flex h-[24px] w-[108px] items-center rounded-[2px] border border-[#9da5aa] bg-[#f4f4f4] pl-[7px] text-[12.8px] text-[#333]">
        <i className="mr-[5px] grid size-[12px] place-items-center rounded-full bg-[#55585a] text-[9px] font-bold not-italic text-white">?</i>
        <span className="whitespace-nowrap">날씨기호 설명</span>
      </div>
      <div className="absolute left-[648px] top-[10px] grid size-[30px] place-items-center rounded-full bg-[#5c6a72]">
        <svg viewBox="0 0 16 16" className="size-[15px]" fill="none" stroke="#fff" strokeWidth="1.700"><path d="M7 2H2v12h12V9M10 1.500h4.500V6M14 2L6.500 9.500" /></svg>
      </div>
      <div className="absolute left-[655px] top-[524px] flex h-[60px] w-[30px] flex-col items-center justify-around rounded-full bg-[#33393d]/95 py-[1px] text-white">
        <Plus className="size-[19px]" strokeWidth={2.4} /><Minus className="size-[19px]" strokeWidth={2.4} />
      </div>
      <div className="absolute left-[655px] top-[588px] flex h-[59px] w-[30px] flex-col items-center justify-around rounded-full bg-[#56666d]/85 py-[2px]">
        <svg viewBox="0 0 20 10" className="h-[10px] w-[20px]"><path d="M0 0h2v4h1V0h2v3h1V0h2v4h1V0h2v3h1V0h2v4h1V0h2v3h1V0h2v9H0z" fill="#fff" /></svg>
        <svg viewBox="0 0 16 16" className="size-[16px]"><path d="M0 1l4.500-1v16L0 15zM5.800 0h4.400v16H5.800zM11.500 0L16 1v14l-4.500 1z" fill="#fff" /></svg>
      </div>
      <div className="absolute left-[608px] top-[664px] h-[26px] w-[75px] rounded-[3px] bg-[#222426]/80 p-[3px]">
        <div className="h-[20px] border border-t-0 border-white text-center text-[10px] leading-[11px] text-white">50 km</div>
      </div>
      <div className="absolute left-[19px] top-[664px] grid h-[26px] w-[139px] place-items-center rounded-[3px] bg-[#33393d]/95 pb-[2px] text-[13.8px] leading-none text-white">12.13.(금) 14:00 갱신</div>
    </div>
  );
}

function MainColumn() {
  return (
    <section className={`ml-[225px] flex w-[690px] flex-none flex-col ${KR}`}>
      <div className="-ml-[2px] mt-[17px] flex gap-[6px] text-[19.5px] text-white">
        <span className="grid h-[45px] w-[124px] place-items-center rounded-full bg-[#0099e5] pb-[2px] font-medium shadow-[0_1px_1px_#999]">날씨</span>
        <span className="grid h-[45px] w-[124px] place-items-center rounded-full bg-[#666] pb-[2px] shadow-[0_1px_1px_#999]">전국</span>
      </div>
      <div className="mt-[17px] flex h-[49px]">
        <div className="flex w-[440px] items-center rounded-[3px] border border-[#c5c5c5] pl-[10px] pt-[2px] text-[17.4px] text-[#666]">주요지명으로 입력</div>
        <div className="ml-[5px] grid w-[60px] place-items-center rounded-[3px] bg-[#666] pr-[2px]"><Search className="size-[36px] text-white" strokeWidth={1.6} /></div>
        <div className="ml-auto grid w-[140px] place-items-center rounded-[3px] bg-[#666] pb-[4px] text-[17.2px] text-white">읍면동으로 선택</div>
      </div>
      <MapPanel />
      <h2 className="ml-[10px] mt-[18px] text-[17.4px] font-medium leading-[26px] text-[#222]">일별 예보</h2>
    </section>
  );
}

const Help = () => <i className="ml-[2px] grid size-[14px] place-items-center rounded-full bg-[#666] text-[10px] font-bold not-italic leading-none text-[#ddd]">?</i>;

function Gauge({ value, unit, label, code, grade, blue, frac }: { value: string; unit: string; label: string; code: string; grade: string; blue?: boolean; frac: number }) {
  const c = 2 * Math.PI * 33.5;
  return (
    <div className="flex w-[158px] flex-col items-center">
      <div className="relative grid h-[74px] w-[74px] place-items-center">
        <svg viewBox="0 0 74 74" className="absolute inset-0">
          <circle cx="37" cy="37" r="33.500" fill={blue ? "#f3fbff" : "#ebf8f0"} stroke={blue ? "#b1d9ef" : "#a3e4b9"} strokeWidth="4" />
          <circle cx="37" cy="37" r="33.500" fill="none" stroke={blue ? "#009fe8" : "#60c380"} strokeWidth="6.500" strokeDasharray={`${c * frac} ${c}`} transform="rotate(-90 37 37)" />
        </svg>
        <div className="relative text-center text-[15.8px] leading-[13px]">{value}<br /><span className="text-[13px]">{unit}</span></div>
      </div>
      <div className="-ml-[2px] mt-[8px] flex h-[22px] items-center whitespace-nowrap text-[15.6px]">{label}<span className="text-[12.8px]">({code})</span></div>
      <div className="-ml-[2px] mt-[2px] flex h-[22px] items-center text-[14.8px]">{grade}<Help /></div>
    </div>
  );
}

function SidePanel() {
  return (
    <section className={`ml-[13px] flex w-[484px] flex-none flex-col text-black ${KR}`}>
      <div className="mt-[16px] flex h-[48px] items-center pl-[122px]">
        <div className="flex h-[48px] w-[206px] items-center rounded-md border border-[#a52a2a] pl-[11px] text-[#a52a2a]">
          <svg viewBox="0 0 28 28" className="size-[28px]"><path d="M6 23v-7a8 8 0 0 1 16 0v7z" fill="#e84a3c" /><path d="M16 9a7 7 0 0 1 6 7v7h-6z" fill="#c93a30" /><path d="M5 22h18v4H5z" fill="#555" /><path d="M14 1v4M7 3l2 4M21 3l-2 4M2 8l3 3M26 8l-3 3M0 16h4M24 16h4" stroke="#e04b3e" strokeWidth="1.400" /></svg>
          <span className="ml-[7px] w-[118px] whitespace-nowrap pb-[2px] text-[17.5px]">전국특보 발효중</span>
          <span className="ml-[18px] text-[8px]">▼</span>
        </div>
        <svg viewBox="0 0 28 28" className="ml-[17px] size-[28px] flex-none"><circle cx="14" cy="14" r="12.800" fill="none" stroke="#111" strokeWidth="1.500" /><circle cx="14" cy="7" r="2" /><path d="M11 11h4.500v10h1.500v1.500h-6V21h1v-8.500h-1z" /></svg>
        <svg viewBox="0 0 28 28" className="ml-[25px] size-[28px] flex-none" fill="none" stroke="#111" strokeWidth="1.600" strokeLinejoin="round"><circle cx="14" cy="14" r="3" /><path d="M12 1h4l1 3.500 3 1.300L23 4l2.500 2.500L24 10l1 2.500 2.500 1V17l-3 1-1 2.500L25 24l-2.500 2L19 24l-2.500 1L15.500 27.500h-3l-1-2.500L9 24l-3.500 2L3 23.500 4.500 20l-1-2.500L1 16.500V12l2.500-1 1.300-2.500L3 5l2.500-2L9 4.500 11 4z" /></svg>
        <div className="ml-[26px] flex w-[25px] flex-none flex-col gap-[5px]"><i className="h-[5px] bg-black" /><i className="h-[5px] bg-black" /><i className="h-[5px] bg-black" /></div>
      </div>

      <div className="mt-[16px] flex h-[47px] items-center rounded-[4px] bg-[#edf0f6]">
        <svg viewBox="0 0 22 22" className="ml-[13px] size-[22px]" fill="none"><circle cx="11" cy="11" r="10.300" fill="#f7f8fa" stroke="#aaa" /><circle cx="11" cy="11" r="7.300" stroke="#111" strokeWidth="1.600" /><path d="M11 3v5M11 14v5M3 11h5M14 11h5" stroke="#111" strokeWidth="1.800" /></svg>
        <div className="ml-[12px] w-[328px] whitespace-nowrap pt-px leading-[19px]">
          <div className="text-[15.7px]">서울특별시 송파구 방이2동</div>
          <div className="text-[13.8px]">현위치조회: 위경도(37.52,127.11)</div>
        </div>
        <ChevronDown className="-ml-[3px] mt-[2px] size-[15px] text-[#0099e5]" strokeWidth={3} />
        <div className="-mt-[2px] ml-[16px] grid size-[35px] place-items-center rounded-[3px] border border-[#9a9a9a] bg-white"><Star className="size-[15px] fill-[#5f6f7b] text-[#5f6f7b]" strokeWidth={1} /></div>
        <div className="-mt-[2px] ml-[6px] grid size-[35px] place-items-center rounded-[3px] border border-[#9a9a9a] bg-white font-[Roboto] text-[20px] font-bold leading-none text-[#5f6f7b]">?</div>
      </div>

      <div className="mr-[12px] mt-[8px] flex h-[22px] items-center justify-end text-[15.9px]">
        <RotateCw className="mr-[2px] size-[13px] text-[#666]" strokeWidth={2.8} />12.13.(금) 14:40 현재
      </div>

      <div className="mt-[14px] flex h-[60px] pl-[136px]">
        <span className="text-[52px] font-[350] leading-[60px] tracking-[-0.5px]">4.2</span>
        <span className="ml-[2px] text-[21px] leading-[41px]">℃</span>
        <span className="ml-[9px] mt-[27px] whitespace-nowrap text-[18.2px] leading-[30px]">체감(1.6℃)</span>
        <svg viewBox="0 0 16 26" className="mt-[29px] h-[26px] w-[16px]" fill="none"><path d="M5 14V4a3 3 0 0 1 6 0v10a6.700 6.700 0 1 1-6 0z" fill="#f6f6f6" stroke="#8a8a8a" strokeWidth="1.300" /><circle cx="8" cy="18.500" r="4" fill="#a64444" /><path d="M8 8v10" stroke="#a64444" strokeWidth="2" /></svg>
      </div>
      <p className="mt-[21px] text-center text-[20.6px] leading-[30px]">어제와 기온이 같아요</p>

      <div className="mt-[12px] flex h-[48px] pl-[5px] text-[14.9px]">
        <div className="flex w-[158px] flex-col items-center">
          <div className="flex h-[27px] items-center"><svg viewBox="0 0 12 16" className="mr-[4px] h-[14px] w-[11px]"><path d="M6 1C9 6 11 8 11 11a5 4.500 0 0 1-10 0C1 8 3 6 6 1z" fill="#e9f4fb" stroke="#7d93aa" /><path d="M3 11q1 3 4 2" fill="none" stroke="#39a9e8" strokeWidth="1.500" /></svg>습도</div>
          <div className="mt-[2px] leading-[24px]">27 <small className="text-[12px]">%</small></div>
        </div>
        <div className="h-[44px] w-px bg-[#ccc]" />
        <div className="flex w-[157px] flex-col items-center">
          <div className="flex h-[27px] items-center"><svg viewBox="0 0 16 14" className="mr-[2px] h-[13px] w-[15px]" fill="none" stroke="#6c87a3" strokeWidth="1.200"><path d="M1 4h7a2 2 0 1 0-2-2M1 7h12a2.500 2.500 0 1 0-2-4M1 10h7a2 2 0 1 1-2 2M10 10h3" /></svg>바람</div>
          <div className="mt-[2px] leading-[24px]">서 2.9 <small className="text-[13px]">m/s</small></div>
        </div>
        <div className="h-[44px] w-px bg-[#ccc]" />
        <div className="flex w-[157px] flex-col items-center">
          <div className="flex h-[27px] items-center"><svg viewBox="0 0 12 14" className="mr-[4px] mt-1 h-[13px] w-[11px]"><path d="M1 0v13h10V0" fill="none" stroke="#9aa8b5" strokeWidth="1.400" /><path d="M2.500 6h7v6h-7z" fill="#0099e5" /></svg>1시간강수량</div>
          <div className="mt-[2px] leading-[24px]">- <small className="text-[12.5px]">mm</small></div>
        </div>
      </div>

      <div className="mt-[16px] flex h-[34px] text-[13.7px] leading-[28px]">
        <svg viewBox="0 0 24 18" className="ml-[11px] mt-[7px] h-[17px] w-[22px]" fill="none" stroke="#333" strokeWidth="1.500"><path d="M6.500 13a5.500 5.500 0 0 1 11 0M12 1v4M5 4l2 2.500M19 4l-2 2.500M1 9l3 1M23 9l-3 1" /><path d="M0 14h24M4 17h16" stroke="#777" strokeWidth="1.800" /></svg>
        <span className="ml-[8px] w-[32px]">일출</span><span className="w-[37px]">07:38</span>
        <svg viewBox="0 0 24 18" className="ml-[16px] mt-[7px] h-[17px] w-[22px]"><path d="M6 13.500V11a6 6 0 0 1 12 0v2.500z" fill="#111" /><path d="M0 14h24M4 17h16" stroke="#777" strokeWidth="1.800" /></svg>
        <span className="ml-[7px] w-[33px]">일몰</span><span className="w-[37px]">17:13</span>
        <div className="ml-[15px] h-[34px] w-[110px] flex-none rounded-[3px] border border-[#4a80cf] pt-px text-center text-[13.4px] leading-[14px] text-[#3c82dc]">날씨해설<br />바로가기</div>
        <div className="ml-[15px] h-[34px] w-[110px] flex-none rounded-[3px] border border-[#4a80cf] pt-px text-center text-[13.4px] leading-[14px] text-[#3c82dc]">강수<br />체감영상</div>
      </div>

      <div className="mt-[12px] grid h-[44px] place-items-center bg-[#edf0f6] pb-px text-[15.5px] leading-none">해당지역에 발효중인 특보가 없습니다.</div>

      <div className="mt-[10px] flex pl-[5px]">
        <Gauge value="19" unit="µg/m³" label="초미세먼지" code="PM2.5" grade="보통" frac={0.315} />
        <Gauge value="31" unit="µg/m³" label="미세먼지" code="PM10" grade="보통" frac={0.315} />
        <Gauge value="0.019" unit="ppm" label="오존" code="O3" grade="좋음" blue frac={0.19} />
      </div>

      <div className="mr-[5px] mt-[6px] text-right leading-[28px]">
        <p className="text-[13.7px]">송파구측정소(도시대기) 12.13.(금) 14:00 기준</p>
        <p className="text-[13.5px]">정보출처: 대기질정보(한국환경공단), 일출일몰정보(한국천문연구원)</p>
      </div>

      <div className="mt-[12px] flex h-[20px] items-center text-[14.4px]">
        <i className="ml-[2px] mr-[2px] h-0 w-0 border-y-[6px] border-l-[10px] border-y-transparent border-l-black" />
        <span className="whitespace-nowrap pb-[2px]">가까운 관측지점</span>
        <div className="ml-auto flex gap-[2px] text-[13px] leading-none text-[#3c82dc]">
          <span className="grid h-[20px] w-[55px] place-items-center rounded-[3px] border border-[#3c82dc] bg-[#0099e5] pb-px font-medium text-white">실황</span>
          <span className="grid h-[20px] w-[63px] place-items-center rounded-[3px] border border-[#3c82dc] pb-px">극값1</span>
          <span className="grid h-[20px] w-[63px] place-items-center rounded-[3px] border border-[#3c82dc] pb-px">극값2</span>
        </div>
      </div>
      <div className="mt-[2px] flex h-[26px] items-center justify-between pl-[5px] pr-[5px]">
        <span className="text-[12.7px]">송파 * - 서울특별시 송파구 잠실동</span>
        <span className="text-[12.9px] font-medium tracking-[-0.1px]">12.13.(금) 14:44 현재</span>
      </div>
      <div className="grid grid-cols-[167px_150px_67px_95px] gap-px border border-[#ccc] bg-[#ccc] text-center text-[13.5px]">
        {["기온(체감)", "바람", "습도", "일강수"].map((s) => <div key={s} className="h-[29px] bg-[#edf0f6] leading-[26px]">{s}</div>)}
        {["4.2℃(1.3℃)", "서 3.3m/s", "28%", "-"].map((s) => <div key={s} className="h-[30px] bg-white leading-[26px]">{s}</div>)}
      </div>
      <p className="ml-[5px] mt-[2px] whitespace-nowrap text-[12.6px] leading-[21px]">※ 조회한 위치에서 가장 가까운 지점의 관측자료입니다.</p>
    </section>
  );
}

export default function App() {
  return (
    <div className="flex h-[1040px] w-[1920px] flex-col overflow-hidden bg-[#f7f7f7]">
      <Chrome />
      <div className="ml-[4px] flex h-[928px] w-[1913px] overflow-hidden rounded-lg bg-white shadow-[0_0_2px_#aaa]">
        <div className="flex w-[1905px] flex-none flex-col">
          <Banner />
          <div className="flex h-[888px] overflow-hidden">
            <Sidebar />
            <MainColumn />
            <SidePanel />
          </div>
        </div>
        <div className="w-[8px] flex-none bg-[#fafafa]"><div className="h-[362px] rounded-full bg-[#808080]" /></div>
      </div>
    </div>
  );
}
